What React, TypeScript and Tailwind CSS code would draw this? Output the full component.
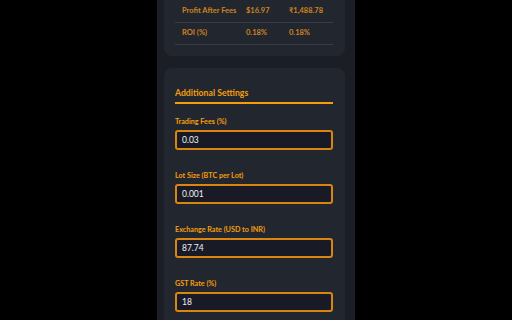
import React from 'react'

const rows = [
  { label: 'Profit After Fees', usd: '$16.97', inr: '₹1,488.78' },
  { label: 'ROI (%)', usd: '0.18%', inr: '0.18%' },
]

const fields = [
  { label: 'Trading Fees (%)', value: '0.03' },
  { label: 'Lot Size (BTC per Lot)', value: '0.001' },
  { label: 'Exchange Rate (USD to INR)', value: '87.74' },
  { label: 'GST Rate (%)', value: '18' },
]

export default function App() {
  return (
    <div
      className="w-[512px] h-[320px] bg-black overflow-hidden flex justify-center"
      style={{ fontFamily: 'Lato, "Open Sans", sans-serif' }}
    >
      <div className="w-[198px] h-full bg-[#1b1e25] pl-[7px] pr-[10px] flex flex-col gap-[12px]">
        {/* Results table (scrolled, top cut off) */}
        <div className="bg-[#22262f] rounded-b-lg pl-[11px] pr-[12px] pb-[11px] shrink-0">
          <table className="w-full border-collapse text-[7.5px] font-bold text-[#cf831f]">
            <tbody>
              {rows.map((r) => (
                <tr key={r.label} className="h-[22px] border-b border-[#363b46]">
                  <td className="pl-[7px] w-[64px]">{r.label}</td>
                  <td className="pl-[7px] w-[43px]">{r.usd}</td>
                  <td className="pl-[7px]">{r.inr}</td>
                </tr>
              ))}
            </tbody>
          </table>
        </div>

        {/* Additional settings */}
        <div className="bg-[#22262f] rounded-t-lg pl-[11px] pr-[12px] pt-[19px] flex-1">
          <h2 className="text-[8.7px] leading-[12px] font-bold text-[#f59e0b] pb-[3px] border-b-2 border-[#f59e0b]">
            Additional Settings
          </h2>
          <div className="pt-[13px]">
            {fields.map((f) => (
              <div key={f.label} className="mb-[21px]">
                <label className="block text-[7.2px] leading-[10px] font-bold text-[#f59e0b] mb-[3px]">
                  {f.label}
                </label>
                <input
                  readOnly
                  value={f.value}
                  className="block w-full h-[20px] rounded-[3px] border-2 border-[#d9850f] bg-[#181b26] px-[5px] text-[8.5px] text-[#eef0f3] outline-none"
                />
              </div>
            ))}
          </div>
        </div>
      </div>
    </div>
  )
}
